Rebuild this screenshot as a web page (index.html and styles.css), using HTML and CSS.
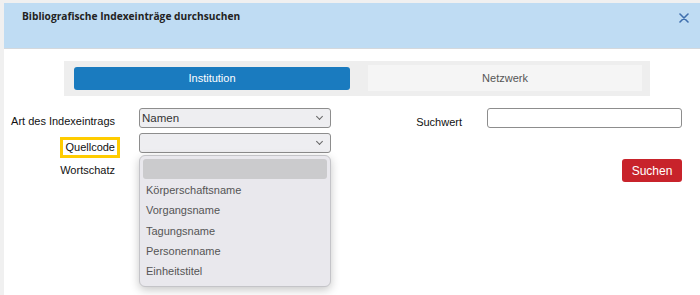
FILE: index.html
```html
<!DOCTYPE html>
<html lang="de">
<head>
<meta charset="utf-8">
<title>Bibliografische Indexeinträge durchsuchen</title>
<link rel="stylesheet" href="styles.css">
</head>
<body>
<div class="dialog">
  <header class="dlg-head">
    <h1 class="dlg-title">Bibliografische Indexeinträge durchsuchen</h1>
    <button class="dlg-close" aria-label="Schließen">
      <svg width="10" height="10" viewBox="0 0 10 10"><path d="M1 1 L9 9 M9 1 L1 9" stroke="#3f6fae" stroke-width="1.6" fill="none" stroke-linecap="round"/></svg>
    </button>
  </header>
  <div class="tabs">
    <div class="tab tab-active">Institution</div>
    <div class="tab">Netzwerk</div>
  </div>
  <form class="form">
    <label class="lbl r1">Art des Indexeintrags</label>
    <div class="sel r1"><span>Namen</span><span class="chev"></span></div>
    <label class="lbl lbl-right r1">Suchwert</label>
    <div class="inp r1"></div>

    <label class="lbl r2"><span class="hl">Quellcode</span></label>
    <div class="selwrap r2">
      <div class="sel"><span></span><span class="chev"></span></div>
      <ul class="popup">
        <li class="opt opt-sel"></li>
        <li class="opt">Körperschaftsname</li>
        <li class="opt">Vorgangsname</li>
        <li class="opt">Tagungsname</li>
        <li class="opt">Personenname</li>
        <li class="opt">Einheitstitel</li>
      </ul>
    </div>

    <label class="lbl r3">Wortschatz</label>
    <div class="btncell r3"><button type="button" class="btn-search">Suchen</button></div>
  </form>
</div>
</body>
</html>
```
FILE: styles.css
```css
html, body { margin: 0; padding: 0; }
body {
  background: #f0f0f0;
  font-family: "Liberation Sans", Arial, sans-serif;
  width: 700px;
  height: 295px;
  overflow: hidden;
}
.dialog {
  margin: 3px 0 0 4px;
  background: #ffffff;
  height: 292px;
}
.dlg-head {
  height: 46px;
  background: #bfdcf3;
  border-bottom: 1px solid #d4d8dc;
  display: flex;
  align-items: flex-start;
  justify-content: space-between;
  padding: 0 0 0 18px;
  box-sizing: border-box;
}
.dlg-title {
  margin: 6px 0 0 0;
  font-family: "Open Sans", sans-serif;
  font-weight: 700;
  font-size: 10.2px;
  line-height: 14px;
  color: #222;
}
.dlg-close {
  border: 0;
  background: transparent;
  padding: 0;
  margin: 8px 9px 0 0;
  width: 14px;
  height: 14px;
  display: flex;
  align-items: center;
  justify-content: center;
}
.tabs {
  margin: 12px 0 0 60px;
  width: 586px;
  box-sizing: border-box;
  padding: 4px 8px 5px 10px;
  background: #eeeeee;
  display: flex;
  gap: 18px;
  align-items: center;
}
.tab {
  flex: 0 0 274px;
  height: 26px;
  line-height: 26px;
  text-align: center;
  font-size: 11px;
  color: #555;
  background: #f5f5f5;
}
.tab-active {
  flex-basis: 276px;
  height: 23px;
  line-height: 23px;
  background: #1a7bbf;
  color: #ffffff;
  border-radius: 3px;
}
.form {
  margin: 12px 0 0 0;
  display: grid;
  grid-template-columns: 111px 24px 192px 131px 25px 195px;
  grid-template-rows: 20px 20px 23px;
  row-gap: 5px;
  font-size: 11px;
}
.r1 { grid-row: 1; }
.r2 { grid-row: 2; }
.r3 { grid-row: 3; }
.lbl {
  grid-column: 1;
  justify-self: end;
  white-space: nowrap;
  padding-top: 7px;
  line-height: 13px;
  color: #111;
}
.r2.lbl { padding-top: 8px; }
.r3.lbl { padding-top: 6px; }
.sel, .selwrap { grid-column: 3; }
.lbl.lbl-right { grid-column: 4; padding-top: 8px; }
.inp { grid-column: 6; }
.btncell { grid-column: 6; justify-self: end; margin-top: 1px; }
.hl {
  display: inline-block;
  border: 3px solid #ffcc00;
  padding: 1px 2px;
  margin: -4px -5px -4px -5px;
}
.sel {
  height: 20px;
  box-sizing: border-box;
  border: 1px solid #8d8d8d;
  border-radius: 3px;
  background: #eeeef1;
  display: flex;
  align-items: center;
  justify-content: space-between;
  padding: 0 8px 0 2px;
  color: #333;
  font-size: 11.5px;
}
.chev {
  width: 4px;
  height: 4px;
  border-right: 1px solid #666;
  border-bottom: 1px solid #666;
  transform: rotate(45deg);
  margin-top: -3px;
}
.selwrap { position: relative; }
.inp {
  height: 20px;
  box-sizing: border-box;
  border: 1px solid #8d8d8d;
  border-radius: 3px;
  background: #fff;
}
.btn-search {
  width: 60px;
  height: 23px;
  border: 0;
  border-radius: 3px;
  background: #c8232b;
  color: #fff;
  font-family: "Liberation Sans", Arial, sans-serif;
  font-size: 12px;
  padding: 0;
}
.popup {
  position: absolute;
  top: 22px;
  left: 0;
  width: 192px;
  box-sizing: border-box;
  margin: 0;
  padding: 3px 3px 5px 3px;
  list-style: none;
  background: #e9e8ed;
  border: 1px solid #c4c4c8;
  border-radius: 6px;
  box-shadow: 0 3px 10px rgba(0,0,0,0.22);
}
.opt {
  height: 20.3px;
  line-height: 20.3px;
  padding-left: 3px;
  color: #555;
  font-size: 11px;
}
.opt-sel {
  height: 20px;
  background: #cbcbcd;
  border-radius: 3px;
  margin-bottom: 1px;
}
```
